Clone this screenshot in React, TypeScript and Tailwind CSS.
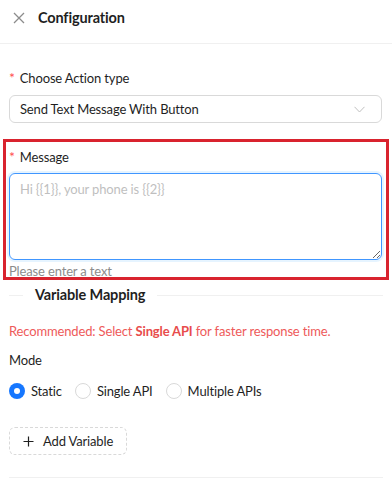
import React from 'react';

const Required: React.FC<{ text: string }> = ({ text }) => (
  <div className="flex items-center h-[22px] text-[13px] text-[#1f1f1f]">
    <span className="text-[#ff4d4f] mr-[5px] text-[14px] leading-none">*</span>
    {text}
  </div>
);

const Radio: React.FC<{ label: string; checked?: boolean }> = ({ label, checked }) => (
  <label className="flex items-center mr-[13px]">
    {checked ? (
      <span className="w-4 h-4 rounded-full bg-[#1677ff] flex items-center justify-center">
        <span className="w-[6px] h-[6px] rounded-full bg-white"></span>
      </span>
    ) : (
      <span className="w-4 h-4 rounded-full border border-[#d9d9d9] bg-white"></span>
    )}
    <span className="ml-[6px] text-[13px] text-[#1f1f1f]">{label}</span>
  </label>
);

export default function App() {
  return (
    <div className="w-[392px] h-[485px] bg-white overflow-hidden font-['Lato',sans-serif] leading-[22px] tracking-[-0.15px]">
      {/* header */}
      <div className="h-[44px] flex items-start pt-[6px] px-[13px] border-b border-[#f0f0f0]">
        <svg width="12" height="12" viewBox="0 0 12 12" className="text-[#8c8c8c] mt-[6px]">
          <path d="M1 1L11 11M11 1L1 11" stroke="currentColor" strokeWidth="1.3" fill="none" />
        </svg>
        <span className="ml-[13px] text-[14.5px] leading-[24px] font-bold text-[#1f1f1f]">Configuration</span>
      </div>

      <div className="pl-[9px] pr-[10px] pt-[23px]">
        <Required text="Choose Action type" />
        <div className="mt-[6px] h-[28px] border border-[#d9d9d9] rounded-[6px] flex items-center justify-between pl-[10px] pr-[16px]">
          <span className="text-[13px] text-[#1f1f1f]">Send Text Message With Button</span>
          <svg width="11" height="7" viewBox="0 0 11 7" className="text-[#bfbfbf]">
            <path d="M0.5 0.8L5.5 6L10.5 0.8" stroke="currentColor" strokeWidth="1" fill="none" />
          </svg>
        </div>
      </div>

      {/* highlighted message field */}
      <div className="mt-[16px] mx-[3px] border-[3px] border-[#d9232e] pl-[3px] pr-[4px] pt-[4px] pb-0">
        <Required text="Message" />
        <textarea
          autoFocus
          placeholder="Hi {{1}}, your phone is {{2}}"
          className="mt-[5px] block w-full h-[87px] border border-[#4096ff] rounded-[6px] px-[10px] py-[4px] text-[13px] leading-[22px] placeholder:text-[#bfbfbf] outline-none shadow-[0_0_0_2px_rgba(5,145,255,0.1)]"
        ></textarea>
        <div className="h-[16px] leading-[20px] text-[13px] text-[#8c8c8c] mt-[1px]">Please enter a text</div>
      </div>

      <div className="pl-[9px] pr-[9px]">
        <div className="flex items-center h-[30px]">
          <div className="w-[14px] border-t border-[#f0f0f0]"></div>
          <span className="px-[12px] text-[14.5px] font-bold text-[#1f1f1f]">Variable Mapping</span>
          <div className="flex-1 border-t border-[#f0f0f0]"></div>
        </div>
        <div className="mt-[10px] text-[13px] text-[#ee5a5a]">
          Recommended: Select <span className="font-bold text-[#e84c4c]">Single API</span> for faster response time.
        </div>
        <div className="mt-[7px] text-[13px] text-[#1f1f1f]">Mode</div>
        <div className="mt-[9px] flex items-center">
          <Radio label="Static" checked />
          <Radio label="Single API" />
          <Radio label="Multiple APIs" />
        </div>
        <button className="mt-[25px] h-[28px] px-[13px] border border-dashed border-[#d9d9d9] rounded-[6px] flex items-center text-[13px] text-[#1f1f1f]">
          <svg width="11" height="11" viewBox="0 0 11 11" className="mr-[9px]">
            <path d="M5.5 0.5V10.5M0.5 5.5H10.5" stroke="currentColor" strokeWidth="1.2" fill="none" />
          </svg>
          Add Variable
        </button>
        <div className="mt-[22px] border-t border-[#f0f0f0]"></div>
      </div>
    </div>
  );
}
